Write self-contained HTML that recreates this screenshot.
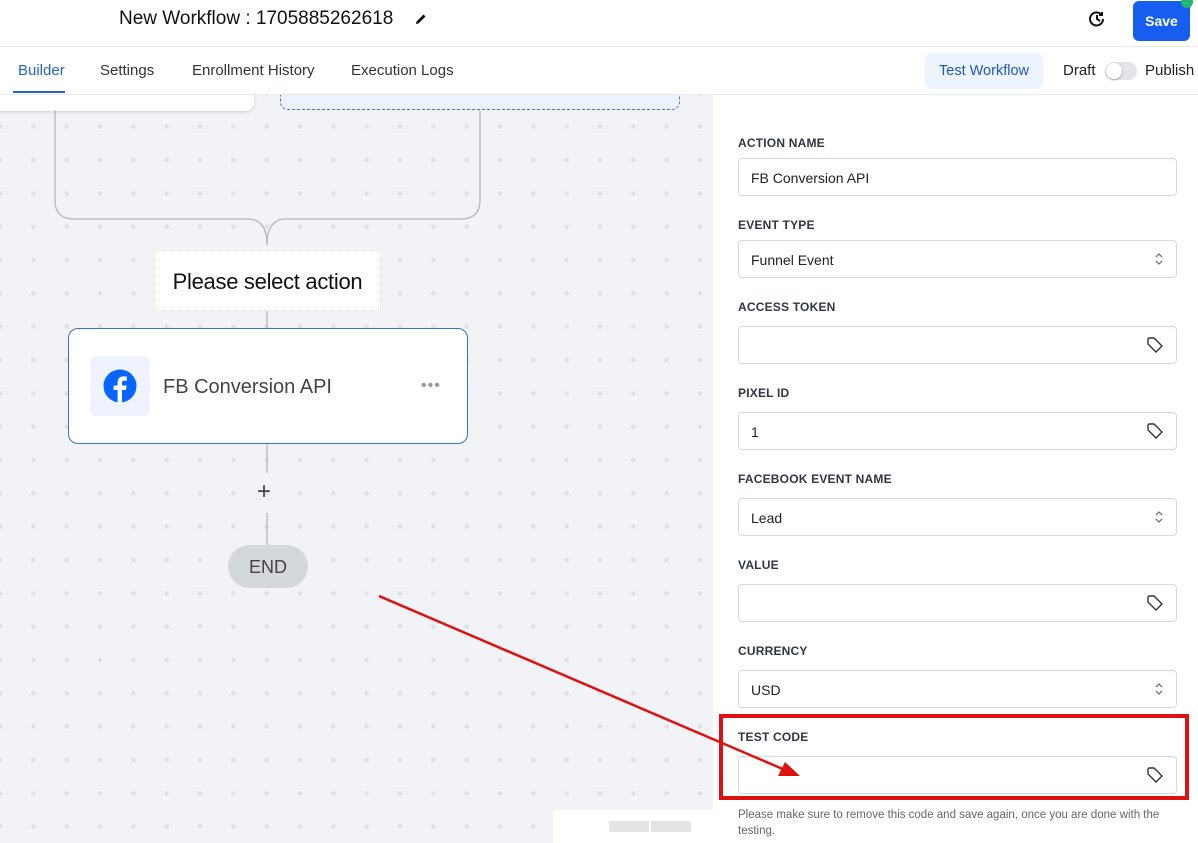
<!DOCTYPE html>
<html><head><meta charset="utf-8"><style>
*{box-sizing:border-box;margin:0;padding:0}
body{width:1198px;height:843px;overflow:hidden;font-family:"Liberation Sans",sans-serif;background:#fff;position:relative}
.abs{position:absolute}
.canvas{left:0;top:95px;width:713px;height:748px;background-color:#f2f3f6;background-image:radial-gradient(circle,#dfe0e4 2px,transparent 2.5px);background-size:33.33px 33.33px;background-position:-16.6px 15px;overflow:hidden}
.lbl{font-size:12px;font-weight:bold;color:#2f3644;letter-spacing:.2px}
.inp{left:738px;width:439px;height:38px;border:1px solid #d5d8de;border-radius:4px;background:#fff;font-size:14px;color:#222;padding:11px 12px}
.tag{position:absolute;right:12px;top:9px}
.chev{position:absolute;right:12px;top:10px}
</style></head><body>
<div class="abs" style="left:119px;top:8px;font-size:19px;color:#111">New Workflow : 1705885262618</div>
<svg class="abs" style="left:414px;top:12px" width="14" height="14" viewBox="0 0 14 14"><path d="M2 12 L2.5 9.5 L9.5 2.5 L11.5 4.5 L4.5 11.5 Z" fill="#111"/></svg>
<svg class="abs" style="left:1087px;top:9px" width="20" height="20" viewBox="0 0 20 20" fill="none" stroke="#111" stroke-width="2"><path d="M16 10a6.5 6.5 0 1 1-1.8-4.5"/><path d="M10 6v4l3 2"/><path d="M15 3v3h-3"/></svg>
<div class="abs" style="left:1133px;top:1px;width:57px;height:40px;background:#155eef;border-radius:6px;color:#fff;font-weight:bold;font-size:14px;text-align:center;line-height:40px">Save</div>
<div class="abs" style="left:1181px;top:-4px;width:12px;height:12px;border-radius:50%;background:#22b573"></div>
<div class="abs" style="left:0;top:46px;width:1198px;height:1px;background:#e8eaee"></div>
<div class="abs" style="left:18px;top:62px;font-size:15px;color:#2563c9">Builder</div>
<div class="abs" style="left:13px;top:91px;width:52px;height:2px;background:#2563c9"></div>
<div class="abs" style="left:100px;top:62px;font-size:15px;color:#333">Settings</div>
<div class="abs" style="left:192px;top:62px;font-size:15px;color:#333">Enrollment History</div>
<div class="abs" style="left:351px;top:62px;font-size:15px;color:#333">Execution Logs</div>
<div class="abs" style="left:925px;top:53px;width:118px;height:36px;background:#eef4fe;border-radius:6px;color:#1d58c8;font-size:14.5px;text-align:center;line-height:36px">Test Workflow</div>
<div class="abs" style="left:1063px;top:62px;font-size:15px;color:#222">Draft</div>
<div class="abs" style="left:1105px;top:62px;width:32px;height:18px;background:#e2e4e8;border-radius:9px"><div style="position:absolute;left:1px;top:1px;width:16px;height:16px;border-radius:50%;background:#fff;box-shadow:0 1px 2px rgba(0,0,0,.3)"></div></div>
<div class="abs" style="left:1145px;top:62px;font-size:15px;color:#222">Publish</div>
<div class="abs" style="left:0;top:94px;width:1198px;height:1px;background:#e8eaee"></div>

<div class="abs canvas">
<div class="abs" style="left:-10px;top:-20px;width:264px;height:36px;background:#fff;border-radius:8px;box-shadow:0 1px 3px rgba(0,0,0,.15)"></div>
<div class="abs" style="left:280px;top:-20px;width:400px;height:35px;background:#edf3fd;border:1.5px dashed #4a72c4;border-radius:8px"></div>
<svg class="abs" style="left:0;top:0" width="713" height="500" fill="none" stroke="#b5b7bc" stroke-width="1.3">
<path d="M55 15 V105 Q55 124 74 124 H248 Q267 124 267 150"/>
<path d="M480 15 V105 Q480 124 461 124 H286 Q267 124 267 150"/>
<path d="M267 215 V233"/><path d="M267 348 V378"/><path d="M267 418 V450"/>
</svg>
<div class="abs" style="left:154px;top:155px;width:227px;height:61px;background:#fff;border:1px dotted #e2e2e2;font-size:22px;color:#111;text-align:center;line-height:61px;letter-spacing:-.3px">Please select action</div>
<div class="abs" style="left:68px;top:233px;width:400px;height:116px;background:#fff;border:1.5px solid #3b6fd0;border-radius:10px">
<div class="abs" style="left:21px;top:27px;width:60px;height:60px;background:#eef3fd;border-radius:6px"></div>
<svg class="abs" style="left:34px;top:40px" width="34" height="34" viewBox="0 0 34 34"><circle cx="17" cy="17" r="16.5" fill="#0866ff"/><path d="M19 34 V21 H23 L23.6 16.5 H19 V13.8 C19 12.5 19.5 11.6 21.3 11.6 H23.8 V7.6 C23.3 7.5 21.9 7.4 20.4 7.4 C17 7.4 14.6 9.4 14.6 13.2 V16.5 H10.6 V21 H14.6 V34 Z" fill="#fff"/></svg>
<div class="abs" style="left:94px;top:47px;font-size:20px;color:#444">FB Conversion API</div>
<div class="abs" style="left:352px;top:48px;font-size:16px;color:#999;letter-spacing:1px">•••</div>
</div>
<div class="abs" style="left:257px;top:383px;font-size:24px;color:#444;font-weight:300">+</div>
<div class="abs" style="left:228px;top:450px;width:80px;height:43px;background:#d4d7dc;border-radius:22px;font-size:18px;color:#444;text-align:center;line-height:44px">END</div>
<div class="abs" style="left:553px;top:715px;width:160px;height:40px;background:#fff"></div>
<div class="abs" style="left:609px;top:726px;width:40px;height:11px;background:#e4e4e4"></div>
<div class="abs" style="left:651px;top:726px;width:40px;height:11px;background:#e4e4e4"></div>
</div>

<div class="abs lbl" style="left:738px;top:136px">ACTION NAME</div>
<div class="abs inp" style="top:158px">FB Conversion API</div>
<div class="abs lbl" style="left:738px;top:218px">EVENT TYPE</div>
<div class="abs inp" style="top:240px">Funnel Event<svg class="chev" width="10" height="16" viewBox="0 0 10 16" fill="none" stroke="#777" stroke-width="1.3"><path d="M2 6 L5 3 L8 6M2 10 L5 13 L8 10"/></svg></div>
<div class="abs lbl" style="left:738px;top:300px">ACCESS TOKEN</div>
<div class="abs inp" style="top:326px"><svg class="tag" width="18" height="18" viewBox="0 0 18 18" fill="none" stroke="#333" stroke-width="1.4"><path d="M2 3 V8 L10 16 L16 10 L8 2 H3 Z"/></svg></div>
<div class="abs lbl" style="left:738px;top:386px">PIXEL ID</div>
<div class="abs inp" style="top:412px">1<svg class="tag" width="18" height="18" viewBox="0 0 18 18" fill="none" stroke="#333" stroke-width="1.4"><path d="M2 3 V8 L10 16 L16 10 L8 2 H3 Z"/></svg></div>
<div class="abs lbl" style="left:738px;top:472px">FACEBOOK EVENT NAME</div>
<div class="abs inp" style="top:498px">Lead<svg class="chev" width="10" height="16" viewBox="0 0 10 16" fill="none" stroke="#777" stroke-width="1.3"><path d="M2 6 L5 3 L8 6M2 10 L5 13 L8 10"/></svg></div>
<div class="abs lbl" style="left:738px;top:558px">VALUE</div>
<div class="abs inp" style="top:584px"><svg class="tag" width="18" height="18" viewBox="0 0 18 18" fill="none" stroke="#333" stroke-width="1.4"><path d="M2 3 V8 L10 16 L16 10 L8 2 H3 Z"/></svg></div>
<div class="abs lbl" style="left:738px;top:644px">CURRENCY</div>
<div class="abs inp" style="top:670px">USD<svg class="chev" width="10" height="16" viewBox="0 0 10 16" fill="none" stroke="#777" stroke-width="1.3"><path d="M2 6 L5 3 L8 6M2 10 L5 13 L8 10"/></svg></div>
<div class="abs lbl" style="left:738px;top:730px">TEST CODE</div>
<div class="abs inp" style="top:756px"><svg class="tag" width="18" height="18" viewBox="0 0 18 18" fill="none" stroke="#333" stroke-width="1.4"><path d="M2 3 V8 L10 16 L16 10 L8 2 H3 Z"/></svg></div>
<div class="abs" style="left:738px;top:807px;width:440px;font-size:11.5px;color:#666;line-height:16px">Please make sure to remove this code and save again, once you are done with the testing.</div>
<div class="abs" style="left:719px;top:714px;width:470px;height:86px;border:4px solid #e01010"></div>
<svg class="abs" style="left:0;top:0" width="1198" height="843"><line x1="379" y1="596" x2="785" y2="770" stroke="#e01010" stroke-width="2.5"/><path d="M800 776 L778 776 L785 762 Z" fill="#e01010"/></svg>
</body></html>
